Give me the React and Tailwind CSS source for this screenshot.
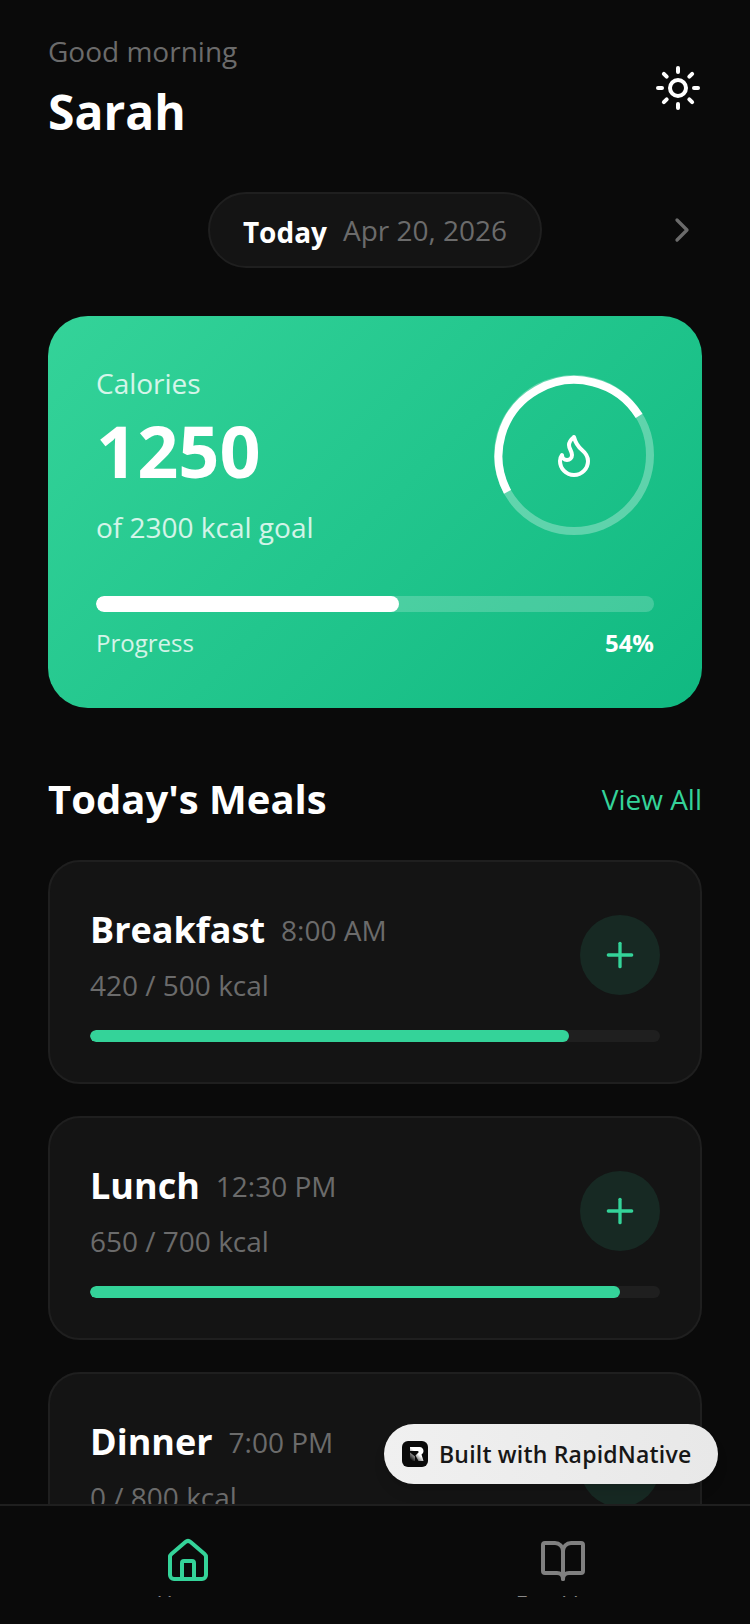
import React from "react";
import { Sun, ChevronRight, Flame, Plus, House, BookOpen } from "lucide-react";

const font = { fontFamily: '"Open Sans", sans-serif' };

function Meal({ name, time, kcal, pct }) {
  return (
    <div className="rounded-[32px] border-2 border-[#1f1f1f] bg-[#141414] px-10 pt-[43px] pb-[40px]">
      <div className="flex items-center justify-between">
        <div>
          <div className="flex items-center gap-4">
            <span className="text-[36px] leading-[50px] font-bold text-white">{name}</span>
            <span className="text-[28px] leading-[38px] text-[#6b6b6b]">{time}</span>
          </div>
          <div className="mt-[11px] text-[28px] leading-[38px] text-[#6b6b6b]">{kcal}</div>
        </div>
        <div className="flex h-20 w-20 items-center justify-center rounded-full bg-[#172923]">
          <Plus size={40} strokeWidth={2} className="text-[#34d399]" />
        </div>
      </div>
      <div className="mt-[26px] h-3 overflow-hidden rounded-full bg-[#1f1f1f]">
        <div className="h-full rounded-full bg-[#34d399]" style={{ width: `${pct}%` }} />
      </div>
    </div>
  );
}

export default function App() {
  return (
    <div style={font} className="relative flex h-[1624px] w-[750px] flex-col overflow-hidden bg-[#0a0a0a]">
      <div className="min-h-0 flex-1 overflow-hidden px-12 pt-8">
        <div className="flex items-center justify-between">
          <div>
            <div className="text-[28px] leading-[38px] text-[#6b6b6b]">Good morning</div>
            <div className="mt-[10px] text-[48px] leading-[64px] font-bold text-white">Sarah</div>
          </div>
          <Sun size={48} strokeWidth={2} className="mr-0 text-white" />
        </div>

        <div className="mt-12 grid grid-cols-[1fr_auto_1fr] items-center">
          <div />
          <div className="flex h-[76px] items-center gap-4 rounded-full border-2 border-[#1f1f1f] bg-[#141414] px-[33px]">
            <span className="mt-[3px] text-[28px] leading-[38px] font-bold text-white">Today</span>
            <span className="text-[28px] leading-[38px] text-[#6b6b6b]">Apr 20, 2026</span>
          </div>
          <div className="flex justify-end">
            <ChevronRight size={40} strokeWidth={2} className="text-[#6b6b6b]" />
          </div>
        </div>

        <div className="mt-12 rounded-[40px] bg-[linear-gradient(135deg,#34d399,#10b981)] px-12 pt-12 pb-[49px]">
          <div className="flex items-center justify-between">
            <div>
              <div className="text-[28px] leading-[38px] text-white/80">Calories</div>
              <div className="-mt-px text-[72px] leading-[98px] font-bold text-white">1250</div>
              <div className="mt-[9px] text-[28px] leading-[38px] text-white/80">of 2300 kcal goal</div>
            </div>
            <div className="relative flex h-40 w-40 items-center justify-center">
              <svg className="absolute inset-0" width="160" height="160" viewBox="0 0 160 160" fill="none">
                <circle cx="80" cy="80" r="76" stroke="white" strokeOpacity="0.3" strokeWidth="8" />
                <path d="M13.5 116.8A76 76 0 0 1 145.1 40.9" stroke="white" strokeWidth="8" />
              </svg>
              <Flame size={48} strokeWidth={2} className="text-white" />
            </div>
          </div>
          <div className="mt-[50px] h-4 overflow-hidden rounded-full bg-white/20">
            <div className="h-full rounded-full bg-white" style={{ width: "54.35%" }} />
          </div>
          <div className="mt-[14px] flex items-center justify-between">
            <span className="text-[24px] leading-[33px] text-white/80">Progress</span>
            <span className="text-[24px] leading-[33px] font-bold text-white">54%</span>
          </div>
        </div>

        <div className="mt-16 mb-[34px] flex items-center justify-between">
          <span className="text-[40px] leading-[54px] font-bold text-white">Today's Meals</span>
          <span className="text-[28px] leading-[38px] text-[#34d399]">View All</span>
        </div>

        <div className="flex flex-col gap-8">
          <Meal name="Breakfast" time="8:00 AM" kcal="420 / 500 kcal" pct={84} />
          <Meal name="Lunch" time="12:30 PM" kcal="650 / 700 kcal" pct={92.9} />
          <Meal name="Dinner" time="7:00 PM" kcal="0 / 800 kcal" pct={0} />
        </div>
      </div>

      <div className="flex h-[120px] shrink-0 items-start border-t-2 border-[#1f1f1f] bg-[#0a0a0a] pt-[31px]">
        <div className="flex h-[60px] flex-1 flex-col items-center overflow-hidden">
          <House size={48} strokeWidth={2} className="shrink-0 text-[#34d399]" />
          <span className="mt-[3px] shrink-0 text-[22px] leading-[30px] font-medium text-[#8a8a8a]">Home</span>
        </div>
        <div className="flex h-[60px] flex-1 flex-col items-center overflow-hidden">
          <BookOpen size={48} strokeWidth={2} className="shrink-0 text-[#808080]" />
          <span className="mt-[3px] shrink-0 text-[22px] leading-[30px] font-medium text-[#8a8a8a]">Food Log</span>
        </div>
      </div>

      <div className="absolute left-[384px] top-[1424px] flex h-[60px] w-[334px] items-center gap-[11px] rounded-full bg-[linear-gradient(90deg,#f0f0f0,#e8e8e8)] pl-[18px] shadow-lg">
        <svg width="26" height="26" viewBox="0 0 26 26">
          <defs>
            <linearGradient id="rlogo" gradientUnits="userSpaceOnUse" x1="8" y1="18" x2="14" y2="11">
              <stop offset="0" stopColor="#0a0a0a" />
              <stop offset="1" stopColor="#ffffff" />
            </linearGradient>
          </defs>
          <rect width="26" height="26" rx="6" fill="#0a0a0a" />
          <path d="M8 6H17.5C20 6 21.5 7.7 21.5 10C21.5 11.5 20.8 12.7 19.5 13.4L21.5 20H16.5L13.5 14.5L16.5 11.5C16.8 10.8 16.5 10 15.6 10H8ZM8 11.5L13 15.5V20H8Z" fill="url(#rlogo)" />
        </svg>
        <span className="text-[23px] leading-[32px] font-semibold tracking-[0.2px] text-[#171717]">Built with RapidNative</span>
      </div>
    </div>
  );
}
